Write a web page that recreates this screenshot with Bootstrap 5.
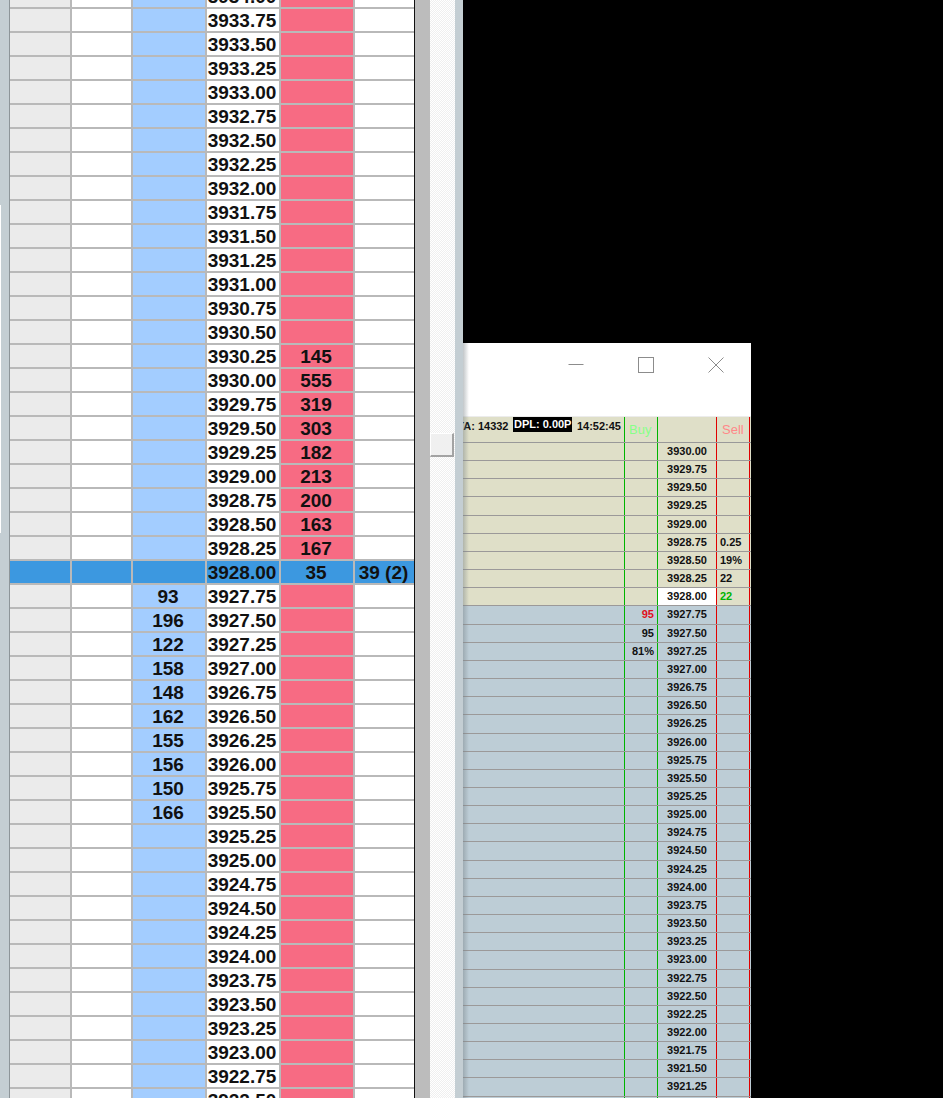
<!DOCTYPE html>
<html lang="en">
<head>
  <meta charset="UTF-8">
  <title>Price ladder</title>
  <link href="https://cdn.jsdelivr.net/npm/bootstrap@5.3.2/dist/css/bootstrap.min.css" rel="stylesheet">
  <style>
    html, body { height: 1098px; overflow: hidden; background: #000; }
    .left-pane { width: 463px; height: 1098px; flex: none; background: #c4ced3; }
    .edge-strip { width: 10px; flex: none; border-right: 1px solid #8d9599; }
    .edge-mark { width: 1px; height: 328px; margin-top: 205px; background: #fff; }
    .ladder { width: 404px; flex: none; margin-top: -15px; background: #fff; font: bold 19px/24px "Liberation Sans", Arial, sans-serif; color: #111; }
    .lrow { height: 24px; }
    .lcell { border-right: 2px solid #b9b9b9; border-bottom: 2px solid #b9b9b9; height: 24px; padding-right: 2px; }
    .c-a { width: 62px; background: #ebebeb; }
    .c-b { width: 61px; background: #fff; }
    .c-bid { width: 74px; background: #a3cdff; }
    .c-price { width: 74px; background: #fff; white-space: nowrap; }
    .c-ask { width: 74px; background: #f76b83; }
    .c-last { width: 59px; background: #fff; border-right: 0; white-space: nowrap; }
    .lrow.is-current .lcell { background: #3c98e0; }
    .black-line { width: 1px; flex: none; background: #111; }
    .gray-band { width: 15px; flex: none; background: #bcbcbc; }
    .scroll-track { width: 25px; flex: none; background: repeating-conic-gradient(#efefef 0 25%, #fff 0 50%) 0 0 / 2px 2px; }
    .scroll-thumb { height: 24px; margin-top: 433px; width: 24px; background: #f0f0f0; border: 1px solid #fff; border-right: 2px solid #a3a3a3; border-bottom: 2px solid #a3a3a3; }
    .side-strip { width: 8px; flex: none; }
    .dom-window { width: 288px; height: 755px; margin-top: 343px; flex: none; background: #fff; font: bold 11px/17px "Liberation Sans", Arial, sans-serif; color: #111; }
    .dom-window::before { content: ""; position: absolute; left: 0; top: 0; bottom: 0; width: 6px; background: linear-gradient(to right, rgba(120,130,135,.45), rgba(120,130,135,0)); z-index: 2; }
    .title-bar { height: 74px; border-bottom: 1px solid #ececec; }
    .win-btn { width: 16px; height: 16px; display: block; position: absolute; top: 14px; }
    .info-row { height: 26px; background: #dfdfc8; border-bottom: 1px solid #999; }
    .drow { height: 18.1667px; border-bottom: 1px solid #9b9999; }
    .drow.up { background: #dfdfc8; }
    .drow.down { background: #bdcdd6; }
    .d-text { width: 162px; flex: none; border-right: 1px solid #00b400; }
    .d-buy { width: 33px; flex: none; border-right: 1px solid #00b400; padding-right: 3px; text-align: right; }
    .d-price { width: 59px; flex: none; border-right: 1px solid #e00000; text-align: center; }
    .d-sell { width: 33px; flex: none; border-right: 1px solid #e00000; padding-left: 3px; }
    .d-end { width: 1px; flex: none; }
    .is-now { background: #fff; }
    .dpl-box { background: #000; color: #fff; height: 15px; line-height: 15px; padding: 0 .5px; margin: 0 5px; white-space: nowrap; flex: none; }
    .info-text { line-height: 18px; white-space: nowrap; flex: none; }
    .info-time { margin-right: 3px; }
    .buy-head { color: #8f8; font: 13px/25px "Liberation Sans", Arial, sans-serif; padding: 0 0 0 4px; text-align: left; }
    .sell-head { color: #f88; font: 13px/25px "Liberation Sans", Arial, sans-serif; padding: 0 0 0 5px; }
    .text-up { color: #e01020; }
    .text-ok { color: #00b400; }
  </style>
</head>
<body class="d-flex">
  <div class="left-pane d-flex overflow-hidden">
    <div class="edge-strip"><div class="edge-mark"></div></div>
    <div class="ladder" id="ladder"></div>
    <div class="black-line"></div>
    <div class="gray-band"></div>
    <div class="scroll-track"><div class="scroll-thumb"></div></div>
    <div class="side-strip"></div>
  </div>

  <div class="dom-window position-relative overflow-hidden">
    <div class="title-bar position-relative">
      <svg class="win-btn" style="left:105px" viewBox="0 0 16 16"><path d="M0.5 7.5H15.5" stroke="#8c8c8c" fill="none"/></svg>
      <svg class="win-btn" style="left:175px" viewBox="0 0 16 16"><rect x="0.5" y="0.5" width="15" height="15" stroke="#8c8c8c" fill="none"/></svg>
      <svg class="win-btn" style="left:245px" viewBox="0 0 16 16"><path d="M0.5 0.5L15.5 15.5M15.5 0.5L0.5 15.5" stroke="#8c8c8c" fill="none"/></svg>
    </div>
    <div class="info-row d-flex">
      <div class="d-text d-flex justify-content-end overflow-hidden">
        <span class="info-text">TA: 14332</span>
        <span class="dpl-box">DPL: 0.00P</span>
        <span class="info-text info-time">14:52:45</span>
      </div>
      <div class="d-buy buy-head">Buy</div>
      <div class="d-price"></div>
      <div class="d-sell sell-head">Sell</div>
    </div>
    <div id="dom"></div>
  </div>

  <script src="https://cdn.jsdelivr.net/npm/bootstrap@5.3.2/dist/js/bootstrap.bundle.min.js"></script>
  <script>
    const askSizes = { "3930.25": 145, "3930.00": 555, "3929.75": 319, "3929.50": 303, "3929.25": 182, "3929.00": 213, "3928.75": 200, "3928.50": 163, "3928.25": 167, "3928.00": 35 };
    const bidSizes = { "3927.75": 93, "3927.50": 196, "3927.25": 122, "3927.00": 158, "3926.75": 148, "3926.50": 162, "3926.25": 155, "3926.00": 156, "3925.75": 150, "3925.50": 166 };

    // Ladder on the left
    let html = "";
    for (let p = 3934; p >= 3922.5; p -= 0.25) {
      const price = p.toFixed(2);
      const current = price === "3928.00";
      html += `<div class="lrow d-flex text-center ${current ? "is-current" : ""}">
        <div class="lcell c-a"></div>
        <div class="lcell c-b"></div>
        <div class="lcell c-bid">${bidSizes[price] || ""}</div>
        <div class="lcell c-price">${price}</div>
        <div class="lcell c-ask">${askSizes[price] || ""}</div>
        <div class="lcell c-last">${current ? "39 (2)" : ""}</div>
      </div>`;
    }
    document.getElementById("ladder").innerHTML = html;

    // DOM window on the right
    const buySide = { "3927.75": ["95", "text-up"], "3927.50": ["95", ""], "3927.25": ["81%", ""] };
    const sellSide = { "3928.75": ["0.25", ""], "3928.50": ["19%", ""], "3928.25": ["22", ""], "3928.00": ["22", "text-ok"] };
    let rows = "";
    for (let p = 3930; p >= 3921; p -= 0.25) {
      const price = p.toFixed(2);
      const buy = buySide[price] || ["", ""];
      const sell = sellSide[price] || ["", ""];
      rows += `<div class="drow d-flex ${p >= 3928 ? "up" : "down"}">
        <div class="d-text"></div>
        <div class="d-buy ${buy[1]}">${buy[0]}</div>
        <div class="d-price ${price === "3928.00" ? "is-now" : ""}">${p > 3921 ? price : ""}</div>
        <div class="d-sell ${sell[1]}">${sell[0]}</div>
        <div class="d-end"></div>
      </div>`;
    }
    document.getElementById("dom").innerHTML = rows;
  </script>
</body>
</html>
